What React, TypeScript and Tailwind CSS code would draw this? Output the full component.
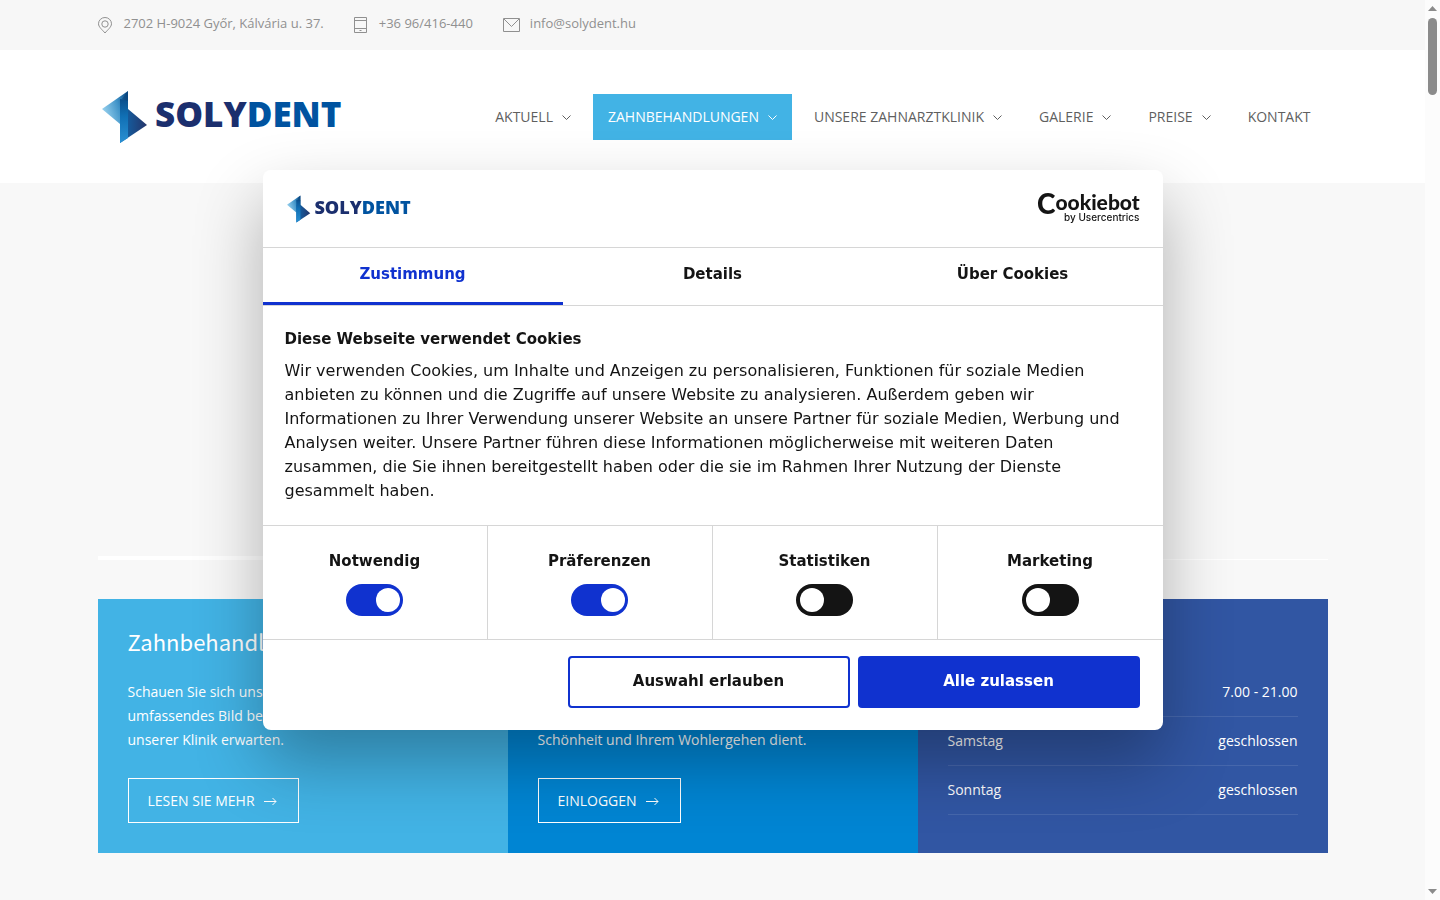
import { useState } from "react";

const navItems = [
  { label: "AKTUELL", sub: true },
  { label: "ZAHNBEHANDLUNGEN", sub: true, active: true },
  { label: "UNSERE ZAHNARZTKLINIK", sub: true },
  { label: "GALERIE", sub: true },
  { label: "PREISE", sub: true },
  { label: "KONTAKT", sub: false },
];

const openingHours = [
  { day: "Montag - Freitag", time: "7.00 - 21.00" },
  { day: "Samstag", time: "geschlossen" },
  { day: "Sonntag", time: "geschlossen" },
];

const tabs = ["Zustimmung", "Details", "Über Cookies"];

const categories = ["Notwendig", "Präferenzen", "Statistiken", "Marketing"];

function Logo({ id, className }: { id: string; className: string }) {
  return (
    <svg viewBox="0 0 240 54" className={className} role="img" aria-label="Solydent">
      <defs>
        <linearGradient id={`${id}-left`} x1="0" y1="0.6" x2="1" y2="0.2">
          <stop offset="0" stopColor="#9bd3ef" />
          <stop offset="0.6" stopColor="#3f93c8" />
          <stop offset="1" stopColor="#0b4c88" />
        </linearGradient>
        <linearGradient id={`${id}-right`} x1="0" y1="0" x2="1" y2="0">
          <stop offset="0" stopColor="#0f6ab0" />
          <stop offset="1" stopColor="#253469" />
        </linearGradient>
        <linearGradient id={`${id}-mid`} x1="0" y1="0" x2="0" y2="1">
          <stop offset="0" stopColor="#0b4f8c" />
          <stop offset="0.4" stopColor="#1070b5" />
          <stop offset="1" stopColor="#2b90d2" />
        </linearGradient>
      </defs>
      <path d="M26 1v18l-8 15L0 19z" fill={`url(#${id}-left)`} />
      <path d="M26 19 45 35 18 53V19z" fill={`url(#${id}-right)`} />
      <path d="M18 9l8 1v38l-8 5z" fill={`url(#${id}-mid)`} />
      <path d="M26 1v10l-6-2z" fill="#0a4379" fillOpacity="0.6" />
      <text
        x="53"
        y="37"
        fontFamily="Open Sans, sans-serif"
        fontWeight="800"
        fontSize="35"
        fill="#1b2f6e"
      >
        SOLY<tspan fill="#0053a0">DENT</tspan>
      </text>
    </svg>
  );
}

function CookiebotLogo() {
  return (
    <svg
      viewBox="0 0 103 32"
      className="h-8 w-[103px] overflow-visible"
      fill="#141414"
      role="img"
      aria-label="Cookiebot by Usercentrics"
    >
      <text x="0" y="21" fontFamily="Lato, sans-serif" fontSize="28" fontWeight="900">
        C
        <tspan dy="-4" fontSize="21">ookiebot</tspan>
      </text>
      <text x="27" y="28" fontFamily="Inter, sans-serif" fontSize="10" fontWeight="500">
        by Usercentrics
      </text>
    </svg>
  );
}

function Chevron() {
  return (
    <svg viewBox="0 0 9 9" className="mt-0.5 h-[9px] w-[9px]" fill="none" stroke="currentColor">
      <path d="M.5 2.5l4 4 4-4" />
    </svg>
  );
}

function Arrow() {
  return (
    <svg viewBox="0 0 13 9" className="mt-0.5 h-[9px] w-[13px]" fill="none" stroke="currentColor">
      <path d="M0 4.5h12M8.5 1l3.5 3.5L8.5 8" />
    </svg>
  );
}

function TopBar() {
  return (
    <div className="bg-[#f7f7f7]">
      <address className="mx-auto flex h-[50px] max-w-[1230px] items-center gap-[30px] pb-0.5 text-[13px] text-[#909090] not-italic">
        <span className="flex items-center gap-3">
          <svg viewBox="0 0 14 17" className="mt-0.5 h-[17px] w-3.5" fill="none" stroke="currentColor">
            <path d="M7 16C4.500 13 .5 10 .5 6.800a6.500 6.300 0 0 1 13 0C13.500 10 9.500 13 7 16z" />
            <circle cx="7" cy="7" r="3.200" />
          </svg>
          2702 H-9024 Győr, Kálvária u. 37.
        </span>
        <span className="flex items-center gap-3">
          <svg viewBox="0 0 13 17" className="mt-0.5 h-[17px] w-[13px]" fill="none" stroke="currentColor">
            <path d="M.5.5h12v15H.5zM.5 3.500h12M.5 11.500h12M5.500 13.500h2" />
          </svg>
          +36 96/416-440
        </span>
        <a href="#mail" className="flex items-center gap-2.5">
          <svg viewBox="0 0 17 15" className="mt-0.5 h-[15px] w-[17px]" fill="none" stroke="currentColor">
            <path d="M.5.5h16v13H.5zM1 1l7.500 7.500L16 1" />
          </svg>
          info@solydent.hu
        </a>
      </address>
    </div>
  );
}

function Header() {
  return (
    <header className="bg-white">
      <div className="mx-auto flex h-[133px] max-w-[1230px] items-center justify-between pl-1">
        <a href="#home">
          <Logo id="main" className="h-[54px] w-[240px]" />
        </a>
        <nav className="flex gap-[7px] pr-0.5 text-sm text-[#5f5f5f]">
          {navItems.map((item) => (
            <a
              key={item.label}
              href="#nav"
              className={`flex h-[46px] items-center gap-[9px] px-[15px] ${
                item.active ? "bg-[#42b3e5] text-white" : ""
              }`}
            >
              {item.label}
              {item.sub && <Chevron />}
            </a>
          ))}
        </nav>
      </div>
    </header>
  );
}

function InfoCards() {
  return (
    <section className="mx-auto grid max-w-[1230px] grid-cols-3 text-sm leading-6 text-white">
      <div className="bg-[#42b3e5] p-[30px]">
        <h2 className="font-['Noto_Sans_CJK_SC',sans-serif] text-[22px] leading-6">Zahnbehandlungen</h2>
        <p className="mt-[27px]">
          Schauen Sie sich unsere Leistungen an, um ein
          <br />
          umfassendes Bild bekommen, was Sie in
          <br />
          unserer Klinik erwarten.
        </p>
        <a
          href="#mehr"
          className="mt-[26px] flex h-[45px] w-fit items-center gap-[9px] border border-white pr-[21px] pl-[19px]"
        >
          LESEN SIE MEHR <Arrow />
        </a>
      </div>
      <div className="bg-[#0085d3] p-[30px]">
        <h2 className="font-['Noto_Sans_CJK_SC',sans-serif] text-[22px] leading-6">Patientenportal</h2>
        <p className="mt-[27px]">
          Melden Sie sich in unserem Portal an,
          <br />
          unserem Service, der Ihrer
          <br />
          Schönheit und Ihrem Wohlergehen dient.
        </p>
        <a
          href="#login"
          className="mt-[26px] flex h-[45px] w-fit items-center gap-[9px] border border-white pr-[21px] pl-[19px]"
        >
          EINLOGGEN <Arrow />
        </a>
      </div>
      <div className="bg-[#3156a3] p-[30px]">
        <h2 className="font-['Noto_Sans_CJK_SC',sans-serif] text-[22px] leading-6">Öffnungszeiten</h2>
        <dl className="mt-[27px] space-y-3">
          {openingHours.map((row) => (
            <div key={row.day} className="flex justify-between border-b border-white/10 pb-3">
              <dt>{row.day}</dt>
              <dd>{row.time}</dd>
            </div>
          ))}
        </dl>
      </div>
    </section>
  );
}

function CookieDialog() {
  const [tab, setTab] = useState(0);
  const [checked, setChecked] = useState([true, true, false, false]);

  const toggle = (index: number) => {
    setChecked(checked.map((value, i) => (i === index ? !value : value)));
  };

  return (
    <div className="fixed inset-y-0 right-[15px] left-0 flex items-center justify-center">
      <div
        role="dialog"
        aria-label="Diese Webseite verwendet Cookies"
        className="w-full max-w-[900px] rounded-lg bg-white font-['DejaVu_Sans',sans-serif] text-[15px] leading-6 text-[#141414] shadow-[0_32px_68px_rgba(0,0,0,0.3)]"
      >
        <div className="flex h-[77px] items-center justify-between pr-[23px] pl-6">
          <Logo id="dialog" className="h-7 w-[124px]" />
          <CookiebotLogo />
        </div>

        <div role="tablist" className="grid grid-cols-3 border-y border-[#d6d6d6]">
          {tabs.map((label, index) => (
            <button
              key={label}
              role="tab"
              aria-selected={tab === index}
              onClick={() => setTab(index)}
              className={`h-[57px] border-b-3 pb-0.5 font-bold ${
                tab === index ? "border-[#1032cf] text-[#1032cf]" : "border-transparent"
              }`}
            >
              {label}
            </button>
          ))}
        </div>

        <div className="px-[22px] pt-[21px] pb-[22px]">
          <h2 className="font-bold">Diese Webseite verwendet Cookies</h2>
          <p className="mt-2 text-base leading-6">
            Wir verwenden Cookies, um Inhalte und Anzeigen zu personalisieren, Funktionen für soziale
            Medien anbieten zu können und die Zugriffe auf unsere Website zu analysieren. Außerdem
            geben wir Informationen zu Ihrer Verwendung unserer Website an unsere Partner für soziale
            Medien, Werbung und Analysen weiter. Unsere Partner führen diese Informationen
            möglicherweise mit weiteren Daten zusammen, die Sie ihnen bereitgestellt haben oder die
            sie im Rahmen Ihrer Nutzung der Dienste gesammelt haben.
          </p>
        </div>

        <div className="grid grid-cols-4 divide-x divide-[#d6d6d6] border-y border-[#d6d6d6]">
          {categories.map((label, index) => (
            <label
              key={label}
              className="flex h-[113px] cursor-pointer flex-col items-center gap-[11px] pt-[23px] font-bold"
            >
              {label}
              <input
                type="checkbox"
                role="switch"
                checked={checked[index]}
                onChange={() => toggle(index)}
                className="h-8 w-[57px] appearance-none rounded-full bg-[#141414] px-[3px] py-1 before:ml-px before:block before:size-6 before:rounded-full before:bg-white checked:bg-[#1032cf] checked:before:ml-auto"
              />
            </label>
          ))}
        </div>

        <div className="flex justify-end gap-2 px-[23px] pt-4 pb-[22px]">
          <button className="h-[52px] w-[282px] rounded border-2 border-[#1032cf] pb-0.5 font-bold">
            Auswahl erlauben
          </button>
          <button className="h-[52px] w-[282px] rounded bg-[#1032cf] pb-0.5 font-bold text-white">
            Alle zulassen
          </button>
        </div>
      </div>
    </div>
  );
}

function ScrollBar() {
  return (
    <div className="fixed inset-y-0 right-0 flex w-[15px] flex-col items-center bg-[#fcfcfc] py-1.5">
      <svg viewBox="0 0 9 5" className="h-[5px] w-[9px]" fill="#8b8b8b">
        <path d="M0 5l4.500-5L9 5z" />
      </svg>
      <div className="mt-[7px] h-[77px] w-[9px] rounded-full bg-[#8b8b8b]" />
      <svg viewBox="0 0 9 5" className="mt-auto h-[5px] w-[9px]" fill="#8b8b8b">
        <path d="M0 0l4.500 5L9 0z" />
      </svg>
    </div>
  );
}

export default function App() {
  return (
    <div className="min-h-screen bg-[#f8f8f8] pr-[15px] font-['Open_Sans',sans-serif]">
      <TopBar />
      <Header />
      <main className="pt-[373px]">
        <div className="mx-auto mb-[39px] flex max-w-[1230px] items-end">
          <div className="h-1 flex-1 bg-white" />
          <div className="h-px flex-1 bg-white" />
        </div>
        <InfoCards />
      </main>
      <CookieDialog />
      <ScrollBar />
    </div>
  );
}
